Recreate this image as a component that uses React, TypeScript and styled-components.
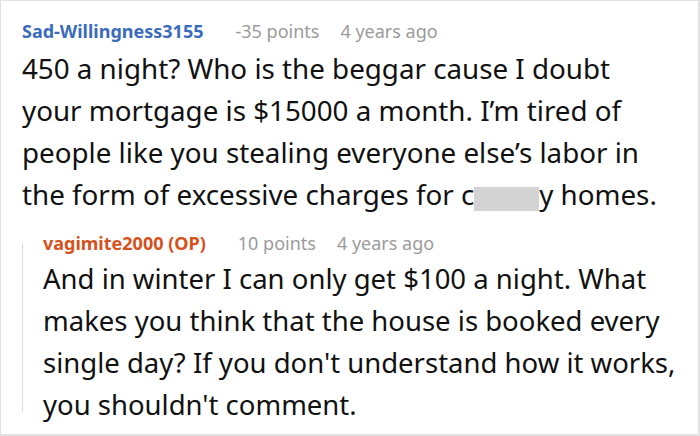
import { createGlobalStyle, styled } from 'styled-components';

const GlobalStyle = createGlobalStyle`
  html, body {
    margin: 0;
    padding: 0;
    background: #ffffff;
  }
`;

const Frame = styled('div')({
  width: 700,
  height: 436,
  boxSizing: 'border-box',
  border: '1px solid #e2e2e2',
  borderRightWidth: 2,
  borderBottomWidth: 2,
  padding: '16px 0 0 21px',
  fontFamily: '"Noto Sans", "Open Sans", sans-serif',
  color: '#111111',
  overflow: 'hidden',
});

const Comment = styled('div')({
  display: 'flex',
  flexDirection: 'column',
  gap: 2,
});

const Reply = styled('div')({
  position: 'relative',
  marginTop: 14,
  paddingLeft: 21,
  display: 'flex',
  flexDirection: 'column',
  gap: 1,
  '&::before': {
    content: '""',
    position: 'absolute',
    left: 0,
    top: 14,
    bottom: 14,
    width: 1,
    background: '#dcdcdc',
  },
});

const Header = styled('div')({
  display: 'flex',
  alignItems: 'baseline',
  gap: 32,
  fontSize: 18,
  lineHeight: '28px',
  whiteSpace: 'nowrap',
});

const Author = styled('span')<{ $tone: 'blue' | 'orange' }>(({ $tone }) => ({
  fontWeight: 700,
  color: $tone === 'blue' ? '#3b6bbd' : '#d6511c',
}));

const Meta = styled('span')({
  display: 'flex',
  gap: 21,
  color: '#9b9b9b',
});

const Body = styled('p')<{ $size: number }>(({ $size }) => ({
  margin: 0,
  fontSize: $size,
  lineHeight: '42px',
  whiteSpace: 'nowrap',
}));

const Line = styled('span')({
  display: 'block',
});

const Redacted = styled('span')({
  display: 'inline-block',
  width: 65,
  height: 24,
  background: '#d3d3d3',
  verticalAlign: -6,
});

export default function App() {
  return (
    <>
      <GlobalStyle />
      <Frame>
        <Comment>
          <Header>
            <Author $tone="blue">Sad-Willingness3155</Author>
            <Meta>
              <span>-35 points</span>
              <span>4 years ago</span>
            </Meta>
          </Header>
          <Body $size={27.75}>
            <Line>450 a night? Who is the beggar cause I doubt</Line>
            <Line>your mortgage is $15000 a month. I’m tired of</Line>
            <Line>people like you stealing everyone else’s labor in</Line>
            <Line>
              the form of excessive charges for c<Redacted />y homes.
            </Line>
          </Body>
        </Comment>
        <Reply>
          <Header>
            <Author $tone="orange">vagimite2000 (OP)</Author>
            <Meta>
              <span>10 points</span>
              <span>4 years ago</span>
            </Meta>
          </Header>
          <Body $size={27.5}>
            <Line>And in winter I can only get $100 a night. What</Line>
            <Line>makes you think that the house is booked every</Line>
            <Line>single day? If you don't understand how it works,</Line>
            <Line>you shouldn't comment.</Line>
          </Body>
        </Reply>
      </Frame>
    </>
  );
}
